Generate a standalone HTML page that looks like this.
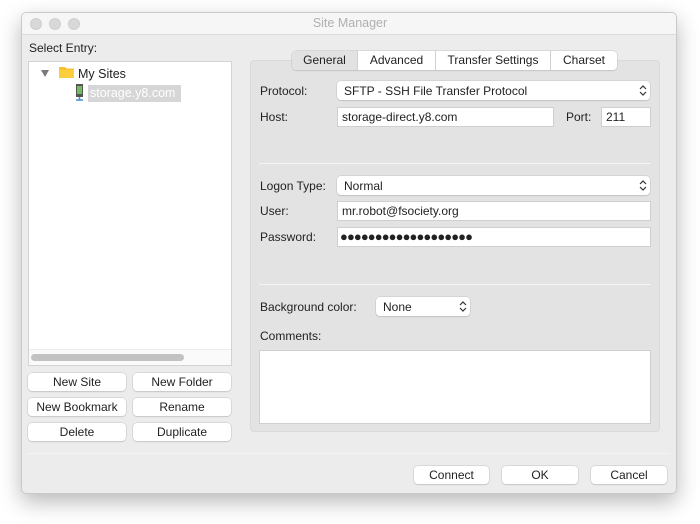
<!DOCTYPE html>
<html><head><style>
*{box-sizing:border-box;margin:0;padding:0}
body{width:700px;height:524px;background:#fff;position:relative;overflow:hidden;font-family:"Liberation Sans",sans-serif;font-size:12px;color:#222}
.a{position:absolute}
.win{left:21px;top:12px;width:656px;height:482px;background:#ececec;border:1px solid #c9c9c9;border-radius:5px;box-shadow:0 8px 22px rgba(0,0,0,.28);overflow:hidden}
.tb{left:0;top:0;width:656px;height:22px;background:#f6f6f6;border-bottom:1px solid #dcdcdc;text-align:center;line-height:21px;color:#b0b0b0;font-size:12.5px}
.dot{width:12px;height:12px;border-radius:50%;background:#d8d8d8;border:1px solid #cfcfcf;top:5px}
.btn{background:#fff;border-radius:4px;box-shadow:0 0 0 .5px #c4c4c4,0 1px 1px rgba(0,0,0,.15);text-align:center;height:18px;line-height:18px;font-size:12px;color:#222}
.inp{background:#fff;border:1px solid #cfcfcf;height:20px;line-height:18px;padding-left:4px;font-size:12px}
.sel{background:#fff;border-radius:4px;box-shadow:0 0 0 .5px #c4c4c4,0 1px 1px rgba(0,0,0,.15);height:19px;line-height:20px;padding-left:7px}
.lbl{font-size:12px;color:#222}
.sep{height:1px;background:#cfcfcf;border-bottom:1px solid #f4f4f4}
</style></head><body>
<div class="a win">
 <div class="a tb">Site Manager</div>
 <div class="a dot" style="left:8px"></div>
 <div class="a dot" style="left:27px"></div>
 <div class="a dot" style="left:46px"></div>
</div>
<div class="a lbl" style="left:29px;top:41px">Select Entry:</div>
<div class="a" style="left:28px;top:61px;width:204px;height:305px;background:#fff;border:1px solid #d3d3d3"></div>
<div class="a" style="left:29px;top:349px;width:202px;height:16px;background:#fafafa;border-top:1px solid #ececec"></div>
<div class="a" style="left:31px;top:354px;width:153px;height:7px;border-radius:4px;background:#c2c2c2"></div>
<div class="a" style="left:41px;top:70px;width:0;height:0;border-left:4.5px solid transparent;border-right:4.5px solid transparent;border-top:7px solid #7a7a7a"></div>
<svg class="a" style="left:59px;top:65px" width="16" height="14"><path d="M0 2h6l1.5 1.5H15V13H0z" fill="#f7c12f"/><path d="M0 5h15v8H0z" fill="#fbcf3c"/></svg>
<div class="a" style="left:78px;top:67px;font-size:12.5px">My Sites</div>
<svg class="a" style="left:75px;top:84px" width="10" height="17"><rect x="1" y="0" width="7" height="13" fill="#555"/><rect x="2" y="2" width="5" height="8" fill="#6cbf5a"/><path d="M4.5 13v3M1 16h7" stroke="#4a8bd0" stroke-width="1.5"/></svg>
<div class="a" style="left:88px;top:85px;width:93px;height:17px;background:#d6d6d6;color:#fff;font-size:12.5px;line-height:17px;padding-left:2px">storage.y8.com</div>

<div class="a btn" style="left:28px;top:373px;width:98px">New Site</div>
<div class="a btn" style="left:133px;top:373px;width:98px">New Folder</div>
<div class="a btn" style="left:28px;top:398px;width:98px">New Bookmark</div>
<div class="a btn" style="left:133px;top:398px;width:98px">Rename</div>
<div class="a btn" style="left:28px;top:423px;width:98px">Delete</div>
<div class="a btn" style="left:133px;top:423px;width:98px">Duplicate</div>

<div class="a" style="left:250px;top:60px;width:410px;height:372px;background:#e3e3e3;border-radius:4px;border:1px solid #dadada"></div>
<div class="a" style="left:292px;top:51px;width:325px;height:19px;background:#fff;border-radius:4px;box-shadow:0 0 0 .5px #c4c4c4,0 1px 1px rgba(0,0,0,.12)"></div>
<div class="a" style="left:292px;top:51px;width:65px;height:19px;background:#e2e2e2;border-radius:4px 0 0 4px;text-align:center;line-height:19px">General</div>
<div class="a" style="left:357px;top:51px;width:1px;height:19px;background:#d0d0d0"></div>
<div class="a" style="left:358px;top:51px;width:77px;height:19px;text-align:center;line-height:19px">Advanced</div>
<div class="a" style="left:435px;top:51px;width:1px;height:19px;background:#d0d0d0"></div>
<div class="a" style="left:436px;top:51px;width:114px;height:19px;text-align:center;line-height:19px">Transfer Settings</div>
<div class="a" style="left:550px;top:51px;width:1px;height:19px;background:#d0d0d0"></div>
<div class="a" style="left:551px;top:51px;width:66px;height:19px;text-align:center;line-height:19px">Charset</div>

<div class="a lbl" style="left:260px;top:84px">Protocol:</div>
<div class="a sel" style="left:337px;top:81px;width:313px">SFTP - SSH File Transfer Protocol</div>
<div class="a lbl" style="left:260px;top:110px">Host:</div>
<div class="a inp" style="left:337px;top:107px;width:217px">storage-direct.y8.com</div>
<div class="a lbl" style="left:566px;top:110px">Port:</div>
<div class="a inp" style="left:601px;top:107px;width:50px">211</div>
<div class="a sep" style="left:259px;top:163px;width:392px"></div>

<div class="a lbl" style="left:260px;top:179px">Logon Type:</div>
<div class="a sel" style="left:337px;top:176px;width:313px">Normal</div>
<div class="a lbl" style="left:260px;top:204px">User:</div>
<div class="a inp" style="left:337px;top:201px;width:314px">mr.robot@fsociety.org</div>
<div class="a lbl" style="left:260px;top:230px">Password:</div>
<div class="a inp" style="left:337px;top:227px;width:314px;font-size:13px;letter-spacing:-.9px;padding-left:2px">●●●●●●●●●●●●●●●●●●●</div>
<div class="a sep" style="left:259px;top:284px;width:392px"></div>

<div class="a lbl" style="left:260px;top:300px">Background color:</div>
<div class="a sel" style="left:376px;top:297px;width:94px">None</div>
<div class="a lbl" style="left:260px;top:329px">Comments:</div>
<div class="a" style="left:259px;top:350px;width:392px;height:74px;background:#fff;border:1px solid #cfcfcf"></div>

<svg class="a" style="left:639px;top:84px" width="8" height="13"><path d="M1 5l3-3 3 3M1 8l3 3 3-3" fill="none" stroke="#333" stroke-width="1.2"/></svg>
<svg class="a" style="left:639px;top:179px" width="8" height="13"><path d="M1 5l3-3 3 3M1 8l3 3 3-3" fill="none" stroke="#333" stroke-width="1.2"/></svg>
<svg class="a" style="left:459px;top:300px" width="8" height="13"><path d="M1 5l3-3 3 3M1 8l3 3 3-3" fill="none" stroke="#333" stroke-width="1.2"/></svg>

<div class="a sep" style="left:28px;top:453px;width:642px"></div>
<div class="a btn" style="left:414px;top:466px;width:75px">Connect</div>
<div class="a btn" style="left:502px;top:466px;width:76px">OK</div>
<div class="a btn" style="left:591px;top:466px;width:76px">Cancel</div>
</body></html>
